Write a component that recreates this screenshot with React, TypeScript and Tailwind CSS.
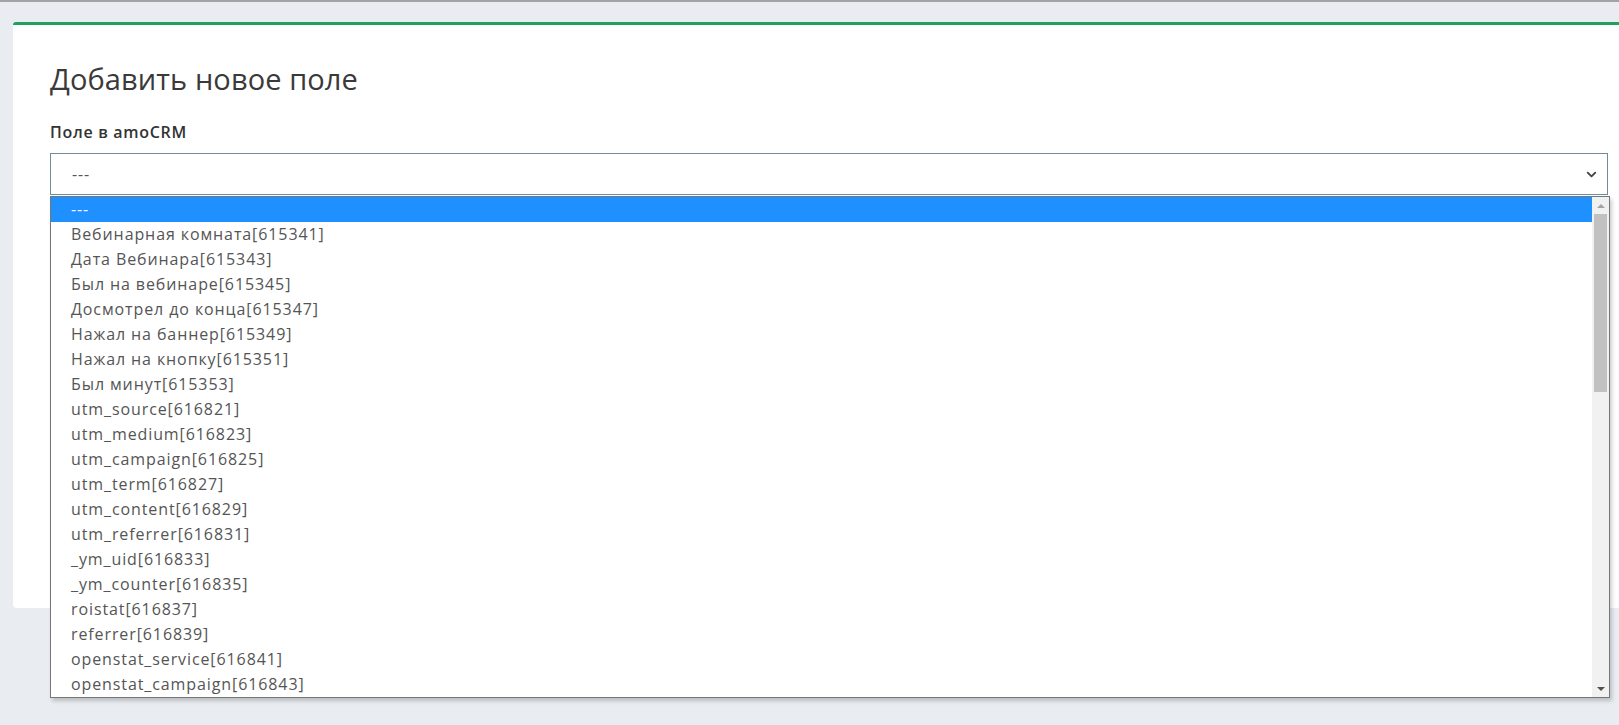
import { ChevronDown } from 'lucide-react';

const options = [
  '---',
  'Вебинарная комната[615341]',
  'Дата Вебинара[615343]',
  'Был на вебинаре[615345]',
  'Досмотрел до конца[615347]',
  'Нажал на баннер[615349]',
  'Нажал на кнопку[615351]',
  'Был минут[615353]',
  'utm_source[616821]',
  'utm_medium[616823]',
  'utm_campaign[616825]',
  'utm_term[616827]',
  'utm_content[616829]',
  'utm_referrer[616831]',
  '_ym_uid[616833]',
  '_ym_counter[616835]',
  'roistat[616837]',
  'referrer[616839]',
  'openstat_service[616841]',
  'openstat_campaign[616843]',
];

export default function App() {
  return (
    <div
      className="h-[725px] overflow-hidden bg-[#e9edf1] border-t-2 border-[#a3a3a3] pt-5 pl-[13px]"
      style={{ fontFamily: '"Open Sans", "Noto Sans", sans-serif' }}
    >
      <div className="mr-[-20px] h-[586px] bg-white border-t-[3px] border-[#21a062] rounded-tl-[3px] rounded-bl-[4px] pl-[37px] pr-[31px] pt-[34px]">
        <h2 className="text-[29px] leading-[40px] text-[#3a3a3a] tracking-[0.1px]">Добавить новое поле</h2>

        {/* Field select */}
        <label className="block mt-[21px] text-[16px] font-semibold leading-[24px] text-[#333] tracking-[0.7px]">
          Поле в amoCRM
        </label>
        <div className="relative mt-[9px]">
          <div className="flex items-center h-[42px] border border-[#6f8c99] pl-[21px] pr-[8px] text-[16px] text-[#555] tracking-[0.9px]">
            <span className="flex-1">---</span>
            <ChevronDown className="w-[15px] h-[15px] text-[#444]" strokeWidth={3} />
          </div>

          {/* Open dropdown list */}
          <div className="absolute left-0 top-[43px] w-[1560px] h-[502px] bg-white border border-[#767676] shadow-[2px_3px_4px_rgba(0,0,0,0.2)] flex">
            <ul className="flex-1">
              {options.map((o, i) => (
                <li
                  key={o}
                  className={
                    i === 0
                      ? 'h-[25px] leading-[25px] pl-[20px] text-[16px] tracking-[0.9px] bg-[#1e90ff] text-white'
                      : 'h-[25px] leading-[25px] pl-[20px] text-[16px] tracking-[0.9px] text-[#555]'
                  }
                >
                  {o}
                </li>
              ))}
            </ul>
            {/* Scrollbar */}
            <div className="w-[17px] bg-[#f1f1f1] flex flex-col items-center">
              <div className="h-[17px] flex items-center justify-center">
                <div className="w-0 h-0 border-l-[4px] border-r-[4px] border-b-[4px] border-l-transparent border-r-transparent border-b-[#a3a3a3]" />
              </div>
              <div className="w-[13px] h-[178px] bg-[#c1c1c1]" />
              <div className="flex-1" />
              <div className="h-[17px] flex items-center justify-center">
                <div className="w-0 h-0 border-l-[4px] border-r-[4px] border-t-[4px] border-l-transparent border-r-transparent border-t-[#505050]" />
              </div>
            </div>
          </div>
        </div>
      </div>
    </div>
  );
}
